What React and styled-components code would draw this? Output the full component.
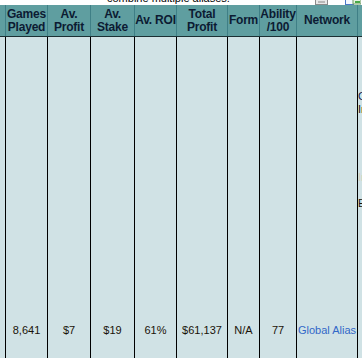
import React from "react";
import styled, { createGlobalStyle } from "styled-components";

const GlobalStyle = createGlobalStyle`
  html, body {
    margin: 0;
    padding: 0;
    background: #ffffff;
    overflow: hidden;
    font-family: "Liberation Sans", Arial, sans-serif;
  }
`;

const COLS = "5px 41px 42px 43px 41px 50px 31px 36px 60px 60px";

const Page = styled.div`
  width: 420px;
  display: flex;
  flex-direction: column;
`;

const Caption = styled.div`
  position: relative;
  height: 5px;
  overflow: hidden;
  display: flex;
  align-items: flex-end;
  padding-left: 107px;
  font-size: 11px;
  line-height: 13px;
  color: #000;
  white-space: nowrap;
`;

const Icon = styled.svg`
  position: absolute;
  top: 0;
  left: ${(p) => p.$left}px;
`;

const Table = styled.div`
  display: flex;
  flex-direction: column;
  row-gap: 1px;
  background: #1b2f33;
`;

const Row = styled.div`
  display: grid;
  grid-template-columns: ${COLS};
  column-gap: 1px;
  background: ${(p) => (p.$head ? "#3f7f86" : "#000000")};
`;

const HeadCell = styled.div`
  height: 31px;
  background: #5f9ea0;
  display: flex;
  align-items: center;
  justify-content: center;
  text-align: center;
  font-size: 12px;
  font-weight: bold;
  line-height: 13px;
  letter-spacing: -0.2px;
  color: #0c1b33;
  white-space: nowrap;
  overflow: hidden;
`;

const Cell = styled.div`
  height: 586px;
  background: #d0e2e5;
  display: flex;
  align-items: center;
  justify-content: center;
  font-size: 11px;
  line-height: 13px;
  color: #1a1208;
  white-space: nowrap;
  overflow: hidden;
`;

const Link = styled.a`
  color: #3268c8;
  text-decoration: none;
`;

const SideCell = styled.div`
  height: 586px;
  background: #d0e2e5;
  display: flex;
  flex-direction: column;
  padding-top: 53px;
  font-size: 11px;
  line-height: 13px;
  white-space: nowrap;
  overflow: hidden;
`;

const SideLine = styled.div`
  color: ${(p) => p.$color || "#1a1208"};
  margin-top: ${(p) => p.$gap || 0}px;
`;

const headers = [
  "",
  <>Games<br />Played</>,
  <>Av.<br />Profit</>,
  <>Av.<br />Stake</>,
  "Av. ROI",
  <>Total<br />Profit</>,
  "Form",
  <>Ability<br />/100</>,
  "Network",
  "",
];

const values = ["", "8,641", "$7", "$19", "61%", "$61,137", "N/A", "77"];

export default function App() {
  return (
    <Page>
      <GlobalStyle />
      <Caption>
        combine multiple aliases.
        <Icon $left={315} width="13" height="5" viewBox="0 0 13 5">
          <rect x="0.5" y="-2" width="12" height="6.5" fill="#e8e8e8" stroke="#8a8a8a" />
          <rect x="3" y="1" width="7" height="2" fill="#b8b8b8" />
        </Icon>
        <Icon $left={345} width="16" height="5" viewBox="0 0 16 5">
          <rect x="0.5" y="-3" width="8" height="7.5" fill="#f4f8ff" stroke="#4a78c8" />
          <rect x="8" y="-1" width="8" height="5" fill="#e6f2e0" stroke="#6a9a60" />
          <rect x="10" y="1" width="5" height="2" fill="#48a848" />
        </Icon>
      </Caption>
      <Table>
        <Row $head>
          {headers.map((h, i) => (
            <HeadCell key={i}>{h}</HeadCell>
          ))}
        </Row>
        <Row>
          {values.map((v, i) => (
            <Cell key={i}>{v}</Cell>
          ))}
          <Cell>
            <Link href="#">Global Alias</Link>
          </Cell>
          <SideCell>
            <SideLine $color="#10204a">Combine</SideLine>
            <SideLine>Include</SideLine>
            <SideLine $color="#d8cfb8" $gap={55}>Include</SideLine>
            <SideLine $gap={13}>Exclude</SideLine>
          </SideCell>
        </Row>
      </Table>
    </Page>
  );
}
